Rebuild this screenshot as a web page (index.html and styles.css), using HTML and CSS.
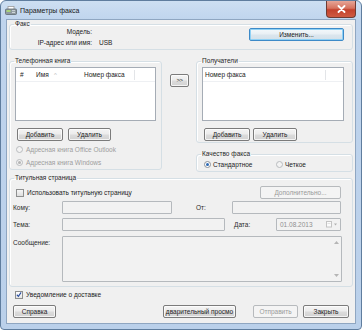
FILE: index.html
```html
<!DOCTYPE html>
<html lang="ru">
<head>
<meta charset="utf-8">
<title>Параметры факса</title>
<link rel="stylesheet" href="styles.css">
</head>
<body>
<div class="window">
  <div class="titlebar">
    <svg class="appicon" width="12" height="9" viewBox="0 0 12 9">
      <rect x="3" y="0.5" width="6" height="3" fill="#fff" stroke="#9a9a9a" stroke-width="0.8"/>
      <rect x="0.5" y="3" width="11" height="5.5" rx="1" fill="#8f9aa0" stroke="#5f6a70" stroke-width="0.8"/>
      <rect x="1.5" y="4" width="4" height="2" fill="#a9d27a"/>
      <rect x="7" y="4.3" width="3" height="0.8" fill="#dfe5e8"/>
      <rect x="7" y="6" width="3" height="0.8" fill="#dfe5e8"/>
    </svg>
    <span class="title">Параметры факса</span>
    <div class="close">
      <svg width="9" height="8" viewBox="0 0 9 8"><path d="M1.5 1 L7.5 7 M7.5 1 L1.5 7" stroke="#fff" stroke-width="1.8" stroke-linecap="round"/></svg>
    </div>
  </div>
  <div class="client">
    <fieldset class="grp grp-fax">
      <legend>Факс</legend>
      <div class="fax-body">
        <div class="fax-info">
          <span class="lbl-right">Модель:</span><span></span>
          <span class="lbl-right">IP-адрес или имя:</span><span>USB</span>
        </div>
        <button class="btn btn-default btn-change">Изменить...</button>
      </div>
    </fieldset>

    <div class="books">
      <fieldset class="grp grp-phone">
        <legend>Телефонная книга</legend>
        <div class="list list-phone">
          <div class="list-head">
            <span class="col-num">#</span>
            <span class="col-name">Имя</span>
            <span class="col-sort">^</span>
            <span class="col-fax">Номер факса</span>
            <span class="col-sep"></span>
          </div>
        </div>
        <div class="btn-row">
          <button class="btn btn-add">Добавить</button>
          <button class="btn btn-del">Удалить</button>
        </div>
        <div class="radio-row disabled">
          <span class="radio"></span><span>Адресная книга Office Outlook</span>
        </div>
        <div class="radio-row disabled">
          <span class="radio checked"></span><span>Адресная книга Windows</span>
        </div>
      </fieldset>

      <button class="btn btn-move">&gt;&gt;</button>

      <div class="right-col">
        <fieldset class="grp grp-recip">
          <legend>Получатели</legend>
          <div class="list list-recip">
            <div class="list-head">
              <span class="col-fax2">Номер факса</span>
              <span class="col-sep"></span>
            </div>
          </div>
          <div class="btn-row btn-row-recip">
            <button class="btn btn-add">Добавить</button>
            <button class="btn btn-del2">Удалить</button>
          </div>
        </fieldset>
        <fieldset class="grp grp-quality">
          <legend>Качество факса</legend>
          <div class="quality-row">
            <span class="radio checked active"></span><span class="q-std">Стандартное</span>
            <span class="radio q-radio2"></span><span>Четкое</span>
          </div>
        </fieldset>
      </div>
    </div>

    <fieldset class="grp grp-cover">
      <legend>Титульная страница</legend>
      <div class="cover-row1">
        <span class="check"></span><span class="check-label">Использовать титульную страницу</span>
        <button class="btn btn-more" disabled>Дополнительно...</button>
      </div>
      <div class="form-row row-to">
        <span class="flbl">Кому:</span>
        <span class="field field-to"></span>
        <span class="flbl flbl-from">От:</span>
        <span class="field field-from"></span>
      </div>
      <div class="form-row row-subj">
        <span class="flbl">Тема:</span>
        <span class="field field-subj"></span>
        <span class="flbl flbl-date">Дата:</span>
        <span class="field field-date">
          <span class="date-text">01.08.2013</span>
          <span class="date-btn">
            <svg width="12" height="7" viewBox="0 0 12 7">
              <rect x="0.5" y="0.5" width="5" height="5.5" fill="#fbfbfb" stroke="#c4c4c4"/>
              <rect x="1.5" y="2" width="3" height="0.6" fill="#d0d0d0"/>
              <path d="M8 2.5 L11 2.5 L9.5 4.5 Z" fill="#b0b0b0"/>
            </svg>
          </span>
        </span>
      </div>
      <div class="form-row row-msg">
        <span class="flbl flbl-msg">Сообщение:</span>
        <div class="field field-msg">
          <div class="scrollbar">
            <svg width="5" height="3" viewBox="0 0 5 3"><path d="M0 3 L2.5 0 L5 3 Z" fill="#b5b5b5"/></svg>
            <svg width="5" height="3" viewBox="0 0 5 3"><path d="M0 0 L2.5 3 L5 0 Z" fill="#b5b5b5"/></svg>
          </div>
        </div>
      </div>
    </fieldset>

    <div class="delivery-row">
      <span class="check checked">
        <svg width="7" height="7" viewBox="0 0 7 7"><path d="M1 3.8 L2.8 5.6 L6 1" stroke="#2b4fa0" stroke-width="1.3" fill="none"/></svg>
      </span>
      <span>Уведомление о доставке</span>
    </div>

    <div class="bottom-row">
      <button class="btn btn-help">Справка</button>
      <button class="btn btn-preview">дварительный просмо</button>
      <button class="btn btn-send" disabled>Отправить</button>
      <button class="btn btn-close">Закрыть</button>
    </div>
  </div>
</div>
</body>
</html>
```

FILE: styles.css
```css
* { box-sizing: border-box; }

html, body {
  margin: 0;
  padding: 0;
  background: #ffffff;
}

body {
  width: 362px;
  height: 330px;
  font-family: "Liberation Sans", Arial, sans-serif;
  font-size: 6.5px;
  color: #1c1c1c;
  overflow: hidden;
}

.window {
  width: 362px;
  height: 330px;
  border: 1px solid #5f7d9e;
  border-radius: 6px 6px 4px 4px;
  background: linear-gradient(#cddff2 0px, #bfd4ed 20px, #bad0ea 100%);
  display: flex;
  flex-direction: column;
}

.titlebar {
  height: 18px;
  display: flex;
  align-items: center;
  flex: none;
}

.appicon {
  margin-left: 4px;
  margin-top: 1px;
  flex: none;
}

.title {
  margin-left: 3px;
  font-size: 7px;
  color: #1a1a1a;
}

.close {
  margin-left: auto;
  margin-right: 5px;
  align-self: flex-start;
  width: 30px;
  height: 17px;
  border: 1px solid #6e3b33;
  border-top: none;
  border-radius: 0 0 4px 4px;
  background: linear-gradient(#e6a597 0%, #d6735f 45%, #c3412c 55%, #cf5a42 100%);
  display: flex;
  align-items: center;
  justify-content: center;
}

.client {
  flex: 1;
  margin: 0 5px 5px 5px;
  border: 1px solid #8fa6c1;
  background: #f0f0f0;
  padding: 0 2px;
  display: flex;
  flex-direction: column;
}

/* Group boxes */
.grp {
  margin: 0;
  padding: 0;
  border: 1px solid #d5dfe5;
  border-radius: 3px;
  min-width: 0;
  box-shadow: inset 1px 1px 0 #ffffff;
}

.grp legend {
  padding: 0 1px;
  margin-left: 4px;
  line-height: 8px;
  height: 8px;
  font-size: 6.5px;
  color: #1e1e1e;
}

.grp-fax {
  padding-bottom: 2px;
}

.fax-body {
  display: flex;
  align-items: flex-start;
}

.fax-info {
  display: grid;
  grid-template-columns: 82px auto;
  column-gap: 7px;
  row-gap: 3px;
  line-height: 8px;
}

.lbl-right {
  text-align: right;
}

/* Buttons */
.btn {
  font-family: "Liberation Sans", Arial, sans-serif;
  font-size: 6.5px;
  color: #1c1c1c;
  height: 13px;
  padding: 0;
  margin: 0;
  border: 1px solid #7b7b7b;
  border-radius: 2px;
  background: linear-gradient(#f4f4f4 0%, #ececec 48%, #dcdcdc 52%, #d2d2d2 100%);
  box-shadow: inset 0 0 0 1px rgba(255,255,255,0.75);
  line-height: 11px;
  text-align: center;
  white-space: nowrap;
  flex: none;
}

.btn[disabled] {
  border-color: #b7babd;
  background: #f4f4f4;
  color: #9a9a9a;
  box-shadow: none;
}

.btn-default {
  border-color: #3d8ac8;
  background: linear-gradient(#eaf6fd 0%, #d9f0fc 48%, #bee6fd 52%, #a7d9f5 100%);
  box-shadow: inset 0 0 0 1px #c8e9fb;
}

.btn-change {
  width: 95px;
  margin-left: auto;
  margin-right: 8px;
  background: linear-gradient(#f3f8fb 0%, #e8eff4 48%, #dbe6ee 52%, #d3e0e9 100%);
  box-shadow: inset 0 0 0 1px #8fd1f5;
}

/* Books row */
.books {
  display: flex;
  align-items: flex-start;
  margin-top: 7px;
}

.grp-phone {
  width: 153px;
  flex: none;
  padding-bottom: 0;
}

.list {
  background: #ffffff;
  border: 1px solid #a5acb5;
  height: 54px;
  margin: 2px 0 0 5px;
}

.list-phone { width: 141px; }
.list-recip { width: 142px; }

.list-head {
  height: 14px;
  display: flex;
  align-items: center;
  border-bottom: 1px solid #eef0f3;
  color: #222;
}

.col-num { margin-left: 4px; width: 16px; }
.col-name { width: 18px; }
.col-sort { width: 30px; color: #b9b9b9; font-size: 6px; }
.col-fax { width: 50px; }
.col-sep {
  width: 1px;
  height: 10px;
  background: #e3e5e8;
}
.col-fax2 { margin-left: 2px; width: 120px; }

.btn-row {
  display: flex;
  margin-top: 7px;
  margin-left: 7px;
  gap: 5px;
}

.btn-add { width: 46px; }
.btn-del { width: 43px; }
.btn-del2 { width: 44px; }
.btn-row-recip { gap: 3px; }

.radio-row {
  height: 13px;
  display: flex;
  align-items: center;
}
.btn-row + .radio-row { margin-top: 2px; }

.radio-row .radio { margin-left: 6px; margin-right: 3px; }

.radio-row.disabled { color: #9d9d9d; }

.radio {
  width: 7px;
  height: 7px;
  border-radius: 50%;
  border: 1px solid #b9bcbf;
  background: #f3f3f3;
  flex: none;
  display: flex;
  align-items: center;
  justify-content: center;
}

.radio.checked::after {
  content: "";
  width: 3px;
  height: 3px;
  border-radius: 50%;
  background: #b4b4b4;
}

.radio.active {
  border-color: #8a8f96;
  background: #ffffff;
}

.radio.active::after {
  background: #2c69b4;
}

.btn-move {
  width: 19px;
  margin-left: 8px;
  margin-top: 17px;
  font-size: 6px;
  letter-spacing: -0.5px;
}

.right-col {
  width: 157px;
  margin-left: 7px;
  flex: none;
  display: flex;
  flex-direction: column;
}

.grp-recip {
  padding-bottom: 1px;
}

.grp-quality {
  margin-top: 7px;
  padding-bottom: 1px;
}

.quality-row {
  height: 12px;
  display: flex;
  align-items: center;
}

.quality-row .radio.active { margin-left: 7px; }
.q-std { margin-left: 2px; width: 63px; }
.q-radio2 { margin-right: 2px; }

/* Cover page */
.grp-cover {
  margin-top: 2px;
  padding-bottom: 4px;
  padding-right: 11px;
}

.cover-row1 {
  display: flex;
  align-items: center;
  height: 13px;
  margin-top: 4px;
}

.check {
  width: 8px;
  height: 8px;
  border: 1px solid #8e8f8f;
  background: linear-gradient(#f6f6f6, #dedede);
  flex: none;
  display: flex;
  align-items: center;
  justify-content: center;
}

.cover-row1 .check { margin-left: 6px; }
.check-label { margin-left: 3px; }

.btn-more {
  width: 81px;
  margin-left: auto;
}

.form-row {
  display: flex;
  align-items: center;
}

.row-to { margin-top: 2px; }
.row-subj { margin-top: 4px; }
.row-msg { margin-top: 5px; align-items: flex-start; }

.flbl {
  width: 52px;
  padding-left: 3px;
  flex: none;
  color: #2a2a2a;
}

.field {
  height: 13px;
  border: 1px solid #b5b9bd;
  border-radius: 1px;
  background: #f2f2f2;
  flex: none;
}

.field-to { width: 110px; }
.flbl-from { width: 36px; margin-left: 24px; padding-left: 0; }
.field-from { width: 109px; }

.field-subj { width: 163px; }
.flbl-date { width: 42px; margin-left: 9px; padding-left: 0; }
.field-date {
  width: 65px;
  display: flex;
  align-items: center;
}
.date-text { margin-left: 3px; color: #8f8f8f; }
.date-btn { margin-left: auto; margin-right: 2px; display: flex; }

.flbl-msg { margin-top: 3px; }
.field-msg {
  width: 280px;
  height: 46px;
  display: flex;
  justify-content: flex-end;
}

.scrollbar {
  width: 9px;
  height: 100%;
  display: flex;
  flex-direction: column;
  align-items: center;
  justify-content: space-between;
  padding: 4px 0;
}

/* Bottom */
.delivery-row {
  display: flex;
  align-items: center;
  height: 9px;
  margin-top: 3px;
}

.delivery-row .check {
  margin-left: 6px;
  margin-right: 3px;
  background: linear-gradient(#ffffff, #e6e6e6);
}

.bottom-row {
  display: flex;
  margin-top: 6px;
}

.btn-help { width: 43px; margin-left: 4px; }
.btn-preview { width: 73px; margin-left: 107px; }
.btn-send { width: 45px; margin-left: 17px; }
.btn-close { width: 46px; margin-left: 5px; }
```
